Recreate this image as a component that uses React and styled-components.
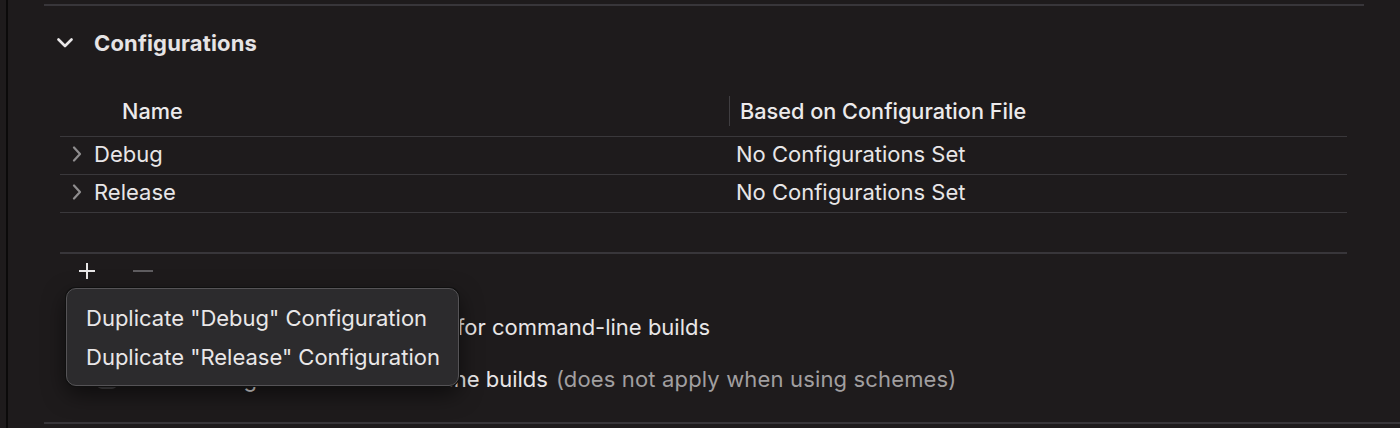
import React from 'react'
import styled, { createGlobalStyle } from 'styled-components'

const GlobalStyle = createGlobalStyle`
  html, body {
    margin: 0;
    padding: 0;
    background: #1e1b1c;
  }
  body {
    font-family: Inter, "Noto Sans", sans-serif;
    color: #e8e6e7;
    -webkit-font-smoothing: antialiased;
  }
`

const Frame = styled.div`
  position: relative;
  height: 428px;
  overflow: hidden;
  background: #1e1b1c;
`

const Content = styled.div`
  margin-left: 6px;
  height: 100%;
  border-left: 2px solid #0b0a0a;
  padding-left: 36px;
  display: flex;
  flex-direction: column;
`

const Rule = styled.div`
  height: 2px;
  flex: none;
  background: #38363a;
  margin-top: ${p => p.top || 0}px;
  margin-right: ${p => p.right || 0}px;
  margin-left: ${p => p.left || 0}px;
`

const SectionHeader = styled.div`
  display: flex;
  align-items: center;
  height: 28px;
  margin-top: 23px;
  padding-left: 13px;
  gap: 21px;
`

const SectionTitle = styled.span`
  font-size: 22px;
  font-weight: 700;
  letter-spacing: 0.15px;
  color: #e6e4e5;
`

const Table = styled.div`
  margin-left: 16px;
  margin-right: 53px;
  margin-top: 29px;
`

const Row = styled.div`
  display: grid;
  grid-template-columns: 669px 1fr;
  align-items: center;
  box-sizing: border-box;
  height: ${p => p.h}px;
  padding-bottom: ${p => p.lift || 0}px;
  border-bottom: 1px solid #3a383b;
  font-size: 22px;
`

const HeadCell = styled.div`
  padding-left: ${p => p.pad}px;
  height: 100%;
  display: flex;
  align-items: center;
  color: #eceaeb;
  font-weight: 500;
  font-size: 21.7px;
`

const HeadDivider = styled.span`
  height: 30px;
  border-left: 1px solid #403e41;
  padding-left: 10px;
  display: flex;
  align-items: center;
`

const NameCell = styled.div`
  display: flex;
  align-items: center;
  padding-left: 12px;
  gap: 12px;
  color: #e8e6e7;
`

const ValueCell = styled.div`
  padding-left: 7px;
  color: #e8e6e7;
`

const Toolbar = styled.div`
  display: flex;
  align-items: center;
  height: 34px;
  margin-left: 34px;
  gap: 37px;
`

const OptionRow = styled.div`
  display: flex;
  align-items: center;
  height: 32px;
  margin-top: ${p => p.top}px;
  margin-left: 53px;
  font-size: 22px;
  color: #e8e6e7;
  white-space: nowrap;
`

const Checkbox = styled.span`
  width: 20px;
  height: 20px;
  border-radius: 5px;
  background: #4a484b;
  flex: none;
  margin-right: 12px;
`

const PopupButton = styled.span`
  display: inline-flex;
  align-items: center;
  justify-content: space-between;
  box-sizing: border-box;
  width: 303px;
  height: 26px;
  padding: 0 10px;
  margin: 0 8px;
  border-radius: 6px;
  background: #5a585b;
`

const Hint = styled.span`
  color: #a19fa0;
  margin-left: 8px;
  letter-spacing: 0.15px;
`

const Menu = styled.div`
  position: absolute;
  left: 66px;
  top: 288px;
  width: 393px;
  height: 98px;
  box-sizing: border-box;
  padding: 9px 0;
  border-radius: 10px;
  background: #2c2b2d;
  border: 1px solid #555356;
  box-shadow: 0 0 0 1px #101010, 0 8px 22px rgba(0, 0, 0, 0.55);
  display: flex;
  flex-direction: column;
`

const MenuItem = styled.div`
  height: 40px;
  display: flex;
  align-items: center;
  padding-left: 19px;
  font-size: 22px;
  color: #e9e7e8;
  white-space: nowrap;
`

const ChevronDown = () => (
  <svg width="16" height="10" viewBox="0 0 16 10">
    <path d="M1.5 1.5 L8 8 L14.5 1.5" fill="none" stroke="#e8e6e7" strokeWidth="2.6" strokeLinecap="round" strokeLinejoin="round" />
  </svg>
)

const ChevronRight = () => (
  <svg width="10" height="16" viewBox="0 0 10 16">
    <path d="M2 1.5 L8 8 L2 14.5" fill="none" stroke="#8f8d8e" strokeWidth="2.2" strokeLinecap="round" strokeLinejoin="round" />
  </svg>
)

const UpDown = () => (
  <svg width="10" height="16" viewBox="0 0 10 16">
    <path d="M2 6 L5 3 L8 6 M2 10 L5 13 L8 10" fill="none" stroke="#e8e6e7" strokeWidth="1.6" />
  </svg>
)

const PlusIcon = () => (
  <svg width="18" height="18" viewBox="0 0 18 18">
    <path d="M9 1 V17 M1 9 H17" stroke="#e8e6e7" strokeWidth="2" />
  </svg>
)

const MinusIcon = () => (
  <svg width="20" height="4" viewBox="0 0 20 4">
    <path d="M0 2 H20" stroke="#5f5d60" strokeWidth="2" />
  </svg>
)

const configs = [
  { name: 'Debug', file: 'No Configurations Set' },
  { name: 'Release', file: 'No Configurations Set' },
]

export default function App() {
  return (
    <Frame>
      <GlobalStyle />
      <Content>
        <Rule top={4} right={36} />
        <SectionHeader>
          <ChevronDown />
          <SectionTitle>Configurations</SectionTitle>
        </SectionHeader>
        <Table>
          <Row h={51}>
            <HeadCell pad={62}>Name</HeadCell>
            <HeadCell pad={0}>
              <HeadDivider>Based on Configuration File</HeadDivider>
            </HeadCell>
          </Row>
          {configs.map(c => (
            <Row key={c.name} h={38} lift={3}>
              <NameCell>
                <ChevronRight />
                {c.name}
              </NameCell>
              <ValueCell>{c.file}</ValueCell>
            </Row>
          ))}
        </Table>
        <Rule top={39} left={16} right={53} />
        <Toolbar>
          <PlusIcon />
          <MinusIcon />
        </Toolbar>
        <OptionRow top={23}>
          Use
          <PopupButton>
            Release
            <UpDown />
          </PopupButton>
          for command-line builds
        </OptionRow>
        <OptionRow top={20}>
          <Checkbox />
          Build all targets for command-line builds
          <Hint>(does not apply when using schemes)</Hint>
        </OptionRow>
        <Rule top={27} />
      </Content>
      <Menu>
        <MenuItem>Duplicate "Debug" Configuration</MenuItem>
        <MenuItem>Duplicate "Release" Configuration</MenuItem>
      </Menu>
    </Frame>
  )
}
